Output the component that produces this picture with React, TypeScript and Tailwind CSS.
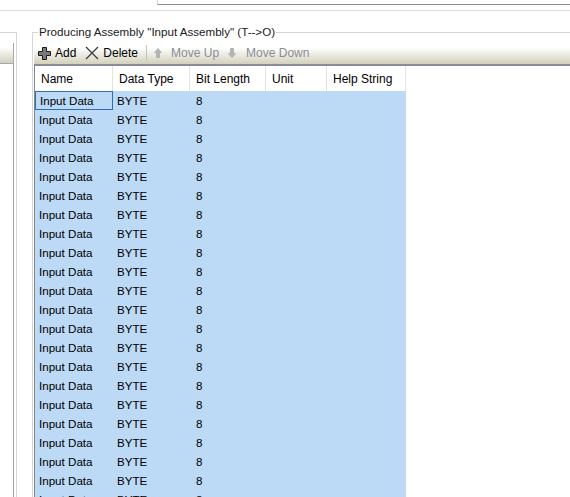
import React from 'react';

const columns = [
  { label: 'Name', w: 'w-[78px]' },
  { label: 'Data Type', w: 'w-[77px]' },
  { label: 'Bit Length', w: 'w-[76px]' },
  { label: 'Unit', w: 'w-[61px]' },
  { label: 'Help String', w: 'w-[79px]' },
];

const rows = Array.from({ length: 24 }, (_, i) => ({ id: i, name: 'Input Data', type: 'BYTE', bits: '8' }));

function PlusIcon() {
  return (
    <svg width="13" height="13" viewBox="0 0 13 13">
      <polygon
        points="4.5,0.5 8.5,0.5 8.5,4.5 12.5,4.5 12.5,8.5 8.5,8.5 8.5,12.5 4.5,12.5 4.5,8.5 0.5,8.5 0.5,4.5 4.5,4.5"
        fill="#7a7a7a"
        stroke="#1a1a1a"
        strokeWidth="1"
      />
    </svg>
  );
}

function DeleteIcon() {
  return (
    <svg width="14" height="14" viewBox="0 0 14 14">
      <path d="M1 1 L13 13 M13 1 L1 13" stroke="#3c3c3c" strokeWidth="1.3" fill="none" />
    </svg>
  );
}

function ArrowIcon({ down = false }: { down?: boolean }) {
  return (
    <svg width="8" height="10" viewBox="0 0 8 10" className={down ? 'rotate-180' : ''}>
      <polygon points="4,0.5 7.5,4.5 5.5,4.5 5.5,9.5 2.5,9.5 2.5,4.5 0.5,4.5" fill="#b4b4b4" stroke="#a0a0a0" strokeWidth="0.6" />
    </svg>
  );
}

export default function App() {
  return (
    <div className="w-[570px] h-[497px] overflow-hidden bg-white text-[12px] leading-[16px] text-black font-['Liberation_Sans',Arial,sans-serif]">
      {/* top strip */}
      <div className="flex h-[11px] border-b border-[#dcdcdc]">
        <div className="w-[157px]" />
        <div className="flex-1 h-[5px] border-l border-l-[#d4d4d4] border-b border-b-[#8c8c8c]" />
      </div>

      <div className="flex items-start">
        {/* collapsed left panel */}
        <div className="mt-[21px] w-[17px] h-[480px] border-t border-r border-[#d5d5d5]">
          <div className="mt-[10px] w-[14px] h-[21px] border-r border-b border-[#a8a8a8] bg-linear-to-b from-white from-20% to-[#d2d1bc]" />
          <div className="w-[14px] h-[440px] border-r border-[#a0a0a0]" />
        </div>

        {/* group box */}
        <fieldset className="ml-[15px] mt-[13px] flex-1 min-w-0 border-t border-l border-[#d5d5d5]">
          <legend className="ml-[5px] px-[1px] text-[11.6px] text-[#1a1a1a]">Producing Assembly "Input Assembly" (T--&gt;O)</legend>

          <div className="ml-[1px] mt-[2px] h-[24px] flex items-center border-b-2 border-[#8a8a98] bg-linear-to-b from-white from-25% to-[#d2d1bc]">
            <span className="ml-[4px] flex"><PlusIcon /></span>
            <span className="ml-[4px]">Add</span>
            <span className="ml-[9px] flex"><DeleteIcon /></span>
            <span className="ml-[4px]">Delete</span>
            <span className="ml-[8px] w-px h-[16px] bg-[#c4c3b4]" />
            <span className="ml-[7px] flex"><ArrowIcon /></span>
            <span className="ml-[9px] text-[#8c8c96]">Move Up</span>
            <span className="ml-[9px] flex"><ArrowIcon down /></span>
            <span className="ml-[10px] text-[#8c8c96]">Move Down</span>
          </div>

          {/* grid */}
          <div className="ml-[1px] border-l border-[#828790] h-[440px]">
            <div className="flex h-[25px]">
              {columns.map(c => (
                <div key={c.label} className={`${c.w} h-full flex items-center pl-[6px] border-r border-[#e3e3e3]`}>
                  {c.label}
                </div>
              ))}
            </div>
            {rows.map(r => (
              <div key={r.id} className="flex h-[19px] w-[371px] bg-[#bcdaf5] text-[11.6px]">
                <div className={`w-[78px] flex items-center pl-[4px] ${r.id === 0 ? 'border border-[#2f6db3] pl-[3px]' : ''}`}>{r.name}</div>
                <div className="w-[77px] flex items-center pl-[4px]">{r.type}</div>
                <div className="w-[76px] flex items-center pl-[6px]">{r.bits}</div>
                <div className="w-[61px]" />
                <div className="w-[79px]" />
              </div>
            ))}
          </div>
        </fieldset>
      </div>
    </div>
  );
}
